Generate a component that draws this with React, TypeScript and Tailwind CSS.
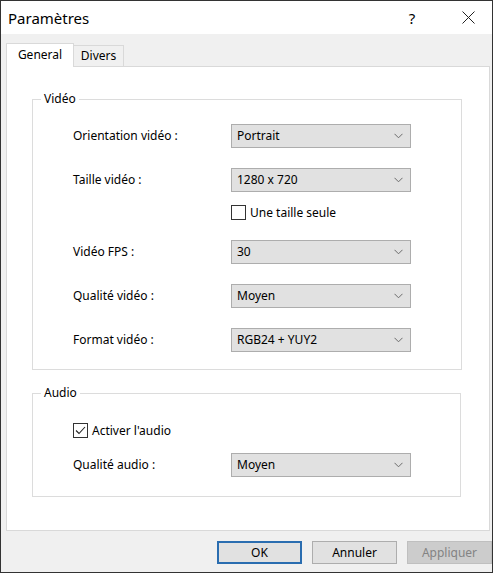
import React from "react";

function Chevron() {
  return (
    <svg width="9" height="6" viewBox="0 0 9 6" className="shrink-0">
      <polyline points="0.5,0.8 4.5,4.8 8.5,0.8" fill="none" stroke="#6b6b6b" strokeWidth="1" />
    </svg>
  );
}

function Select({ value }: { value: string }) {
  return (
    <div className="w-[180px] h-[24px] bg-[#e1e1e1] border border-[#adadad] flex items-center justify-between pl-[5px] pr-[7px]">
      <span>{value}</span>
      <Chevron />
    </div>
  );
}

function Checkbox({ checked, label }: { checked?: boolean; label: string }) {
  return (
    <div className="flex items-center gap-[4px] h-[15px]">
      <div className="w-[15px] h-[15px] border border-[#333333] bg-white flex items-center justify-center shrink-0">
        {checked && (
          <svg width="13" height="13" viewBox="0 0 13 13">
            <polyline points="2,6.5 5,9.5 11,3" fill="none" stroke="#222222" strokeWidth="1.1" />
          </svg>
        )}
      </div>
      <span>{label}</span>
    </div>
  );
}

function Row({ label, value, className }: { label: string; value: string; className: string }) {
  return (
    <div className={"flex items-center h-[24px] " + className}>
      <div className="w-[158px]">{label}</div>
      <Select value={value} />
    </div>
  );
}

export default function App() {
  return (
    <div className="w-[493px] h-[573px] border border-[#333333] bg-[#f0f0f0] overflow-hidden font-['Noto_Sans',sans-serif] text-[12px] text-black leading-[16px] flex flex-col">
      {/* Title bar */}
      <div className="h-[33px] bg-white flex items-center shrink-0">
        <div className="pl-[7px] text-[15px] flex-1">Paramètres</div>
        <div className="w-[20px] text-center text-[15px] mr-[39px]">?</div>
        <div className="w-[14px] flex items-center justify-center mr-[17px]">
          <svg width="13" height="13" viewBox="0 0 13 13">
            <line x1="0.5" y1="0.5" x2="12.5" y2="12.5" stroke="#222" strokeWidth="1" />
            <line x1="12.5" y1="0.5" x2="0.5" y2="12.5" stroke="#222" strokeWidth="1" />
          </svg>
        </div>
      </div>

      {/* Body */}
      <div className="pt-[9px] pl-[5px] flex flex-col">
        <div className="flex items-end h-[23px] relative z-10">
          <div className="h-[24px] -mb-px w-[68px] bg-white border border-[#d9d9d9] border-b-0 flex items-center justify-center pb-[2px]">
            General
          </div>
          <div className="h-[21px] w-[50px] bg-[#f0f0f0] border border-[#d9d9d9] border-l-0 border-b-0 flex items-center justify-center">
            Divers
          </div>
        </div>

        <div className="w-[484px] h-[465px] bg-white border border-[#d9d9d9] flex flex-col">
          {/* Vidéo group */}
          <div className="relative ml-[25px] mt-[32px] w-[430px] h-[271px] border border-[#dcdcdc] pl-[40px] flex flex-col">
            <span className="absolute -top-[9px] left-[8px] px-[3px] bg-white leading-[16px]">Vidéo</span>
            <Row label="Orientation vidéo :" value="Portrait" className="mt-[24px]" />
            <Row label="Taille vidéo :" value="1280 x 720" className="mt-[20px]" />
            <div className="mt-[13px] pl-[158px]">
              <Checkbox label="Une taille seule" />
            </div>
            <Row label="Vidéo FPS :" value="30" className="mt-[20px]" />
            <Row label="Qualité vidéo :" value="Moyen" className="mt-[20px]" />
            <Row label="Format vidéo :" value="RGB24 + YUY2" className="mt-[20px]" />
          </div>

          {/* Audio group */}
          <div className="relative ml-[25px] mt-[23px] w-[429px] h-[104px] border border-[#dcdcdc] pl-[40px] flex flex-col">
            <span className="absolute -top-[9px] left-[8px] px-[3px] bg-white leading-[16px]">Audio</span>
            <div className="mt-[29px]">
              <Checkbox checked label="Activer l'audio" />
            </div>
            <Row label="Qualité audio :" value="Moyen" className="mt-[15px]" />
          </div>
        </div>

        {/* Buttons */}
        <div className="mt-[10px] flex justify-end gap-[10px] pr-0">
          <div className="w-[85px] h-[23px] bg-[#e1e1e1] border-2 border-[#2a6db0] flex items-center justify-center">
            OK
          </div>
          <div className="w-[85px] h-[23px] bg-[#e1e1e1] border border-[#adadad] flex items-center justify-center">
            Annuler
          </div>
          <div className="w-[85px] h-[23px] bg-[#cccccc] border border-[#bfbfbf] flex items-center justify-center text-[#838383]">
            Appliquer
          </div>
        </div>
      </div>
    </div>
  );
}
